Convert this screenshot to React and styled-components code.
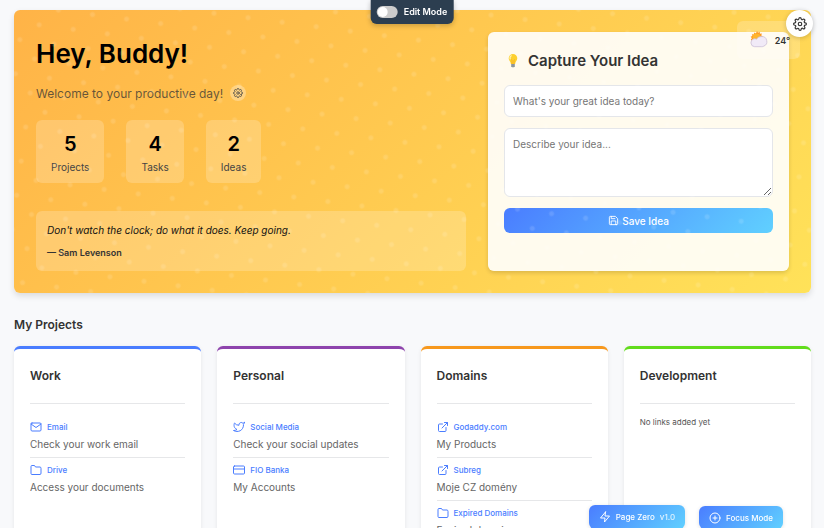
import { useState } from 'react';
import styled, { createGlobalStyle, css } from 'styled-components';
import {
  FiCreditCard,
  FiExternalLink,
  FiFolder,
  FiMail,
  FiPlusCircle,
  FiSave,
  FiSettings,
  FiTwitter,
  FiZap,
} from 'react-icons/fi';

const GlobalStyle = createGlobalStyle`
  * {
    box-sizing: border-box;
  }

  html {
    scrollbar-width: none;
  }

  body {
    margin: 0;
    background: #f8f9fb;
    color: #333;
    font-family: Inter, 'Liberation Sans', sans-serif;
  }

  h1, h2, h3, p, ul {
    margin: 0;
    padding: 0;
  }

  button, input, textarea {
    font-family: inherit;
  }
`;

const Page = styled.main`
  padding: 10px 13px 32px 14px;
`;

const Hero = styled.section`
  position: relative;
  display: grid;
  grid-template-columns: 1fr 0.7fr;
  gap: 22px;
  padding: 22px;
  border-radius: 6px;
  background: linear-gradient(135deg, #ffb347, #ffe259);
  box-shadow: 0 3px 6px rgba(0, 0, 0, 0.12);
`;

const Dots = styled.div`
  position: absolute;
  inset: 0;
  overflow: hidden;
  border-radius: 6px;
  pointer-events: none;

  &::before {
    content: '';
    position: absolute;
    inset: -200% -50%;
    background-image: radial-gradient(circle, rgba(255, 255, 255, 0.13) 2px, transparent 4px);
    background-size: 30px 30px;
    background-position: calc(50% + 15px) calc(50% + 1px);
    transform: rotate(52.5deg) scale(0.81);
  }
`;

const Intro = styled.div`
  display: flex;
  flex-direction: column;
  min-width: 0;
`;

const Title = styled.h1`
  color: #000;
  font-size: 26px;
  font-weight: 600;
  line-height: 44px;
`;

const Welcome = styled.div`
  display: flex;
  align-items: center;
  gap: 7px;
  height: 18px;
  margin-top: 8px;
  color: rgba(51, 51, 51, 0.75);
  font-size: 12px;
`;

const RoundButton = styled.button`
  display: flex;
  align-items: center;
  justify-content: center;
  width: 16px;
  height: 16px;
  padding: 0;
  border: 0;
  border-radius: 50%;
  background: rgba(255, 255, 255, 0.3);
  color: #444;
  cursor: pointer;
`;

const Stats = styled.div`
  display: flex;
  gap: 22px;
  margin-top: 18px;
`;

const Stat = styled.div`
  padding: 11px 15px 8px;
  border-radius: 6px;
  background: rgba(255, 255, 255, 0.2);
  text-align: center;

  strong {
    display: block;
    color: #000;
    font-size: 20px;
    font-weight: 600;
    line-height: 26px;
  }

  span {
    display: block;
    margin-top: 2px;
    color: #444;
    font-size: 10px;
    line-height: 16px;
  }
`;

const Quote = styled.figure`
  margin: auto 0 0;
  padding: 11px;
  border-radius: 6px;
  background: rgba(255, 255, 255, 0.2);

  blockquote {
    margin: 0 0 8px;
    color: #111;
    font-size: 10px;
    font-style: italic;
    line-height: 16px;
  }

  figcaption {
    font-size: 9px;
    font-weight: 600;
    line-height: 14px;
  }
`;

const IdeaForm = styled.form`
  display: flex;
  flex-direction: column;
  gap: 11px;
  min-width: 0;
  padding: 16px 16px 38px;
  border-radius: 6px;
  background: rgba(255, 255, 255, 0.9);
  box-shadow: 0 2px 4px rgba(0, 0, 0, 0.14);
`;

const FormTitle = styled.h2`
  display: flex;
  align-items: center;
  gap: 6px;
  font-size: 15px;
  font-weight: 600;
  line-height: 26px;
`;

const field = css`
  display: block;
  width: 100%;
  border: 1px solid #e4e6ea;
  border-radius: 6px;
  background: #fff;
  color: #333;
  font-size: 10px;
  line-height: 16px;

  &::placeholder {
    color: #757575;
  }
`;

const TextInput = styled.input`
  ${field}
  height: 32px;
  padding: 0 8px;
`;

const TextArea = styled.textarea`
  ${field}
  height: 69px;
  padding: 7px 8px;
  resize: vertical;
`;

const SaveButton = styled.button`
  display: flex;
  align-items: center;
  justify-content: center;
  gap: 3px;
  height: 25px;
  border: 0;
  border-radius: 6px;
  background: linear-gradient(135deg, #4a7dff, #60d0ff);
  color: #fff;
  font-size: 10px;
  font-weight: 500;
  cursor: pointer;
`;

const Weather = styled.div`
  position: absolute;
  top: 11px;
  right: 11px;
  display: flex;
  align-items: center;
  gap: 7px;
  height: 38px;
  padding: 0 10px 0 13px;
  border-radius: 6px;
  background: rgba(255, 255, 255, 0.2);
  font-size: 9px;
  font-weight: 600;
`;

const SettingsButton = styled.button`
  position: fixed;
  top: 10px;
  right: 11px;
  display: flex;
  align-items: center;
  justify-content: center;
  width: 27px;
  height: 27px;
  padding: 0;
  border: 0;
  border-radius: 50%;
  background: #fff;
  color: #333;
  box-shadow: 0 1px 5px rgba(0, 0, 0, 0.2);
  cursor: pointer;
`;

const EditBar = styled.label`
  position: fixed;
  top: 0;
  left: 50%;
  display: flex;
  align-items: center;
  gap: 6px;
  height: 24px;
  padding: 0 6px 2px;
  border-radius: 0 0 6px 6px;
  background: #2c3e50;
  color: #fff;
  box-shadow: 0 2px 5px rgba(0, 0, 0, 0.2);
  font-size: 9px;
  font-weight: 600;
  transform: translateX(-50%);
  cursor: pointer;
`;

const Toggle = styled.input`
  appearance: none;
  width: 21px;
  height: 12px;
  margin: 2px 0 0;
  border-radius: 6px;
  background: ${({ checked }) => (checked ? '#4a7dff' : '#ccc')};

  &::before {
    content: '';
    display: block;
    width: 10px;
    height: 10px;
    margin: 1px;
    margin-left: ${({ checked }) => (checked ? '10px' : '1px')};
    border-radius: 50%;
    background: #fff;
  }
`;

const SectionTitle = styled.h2`
  margin: 22px 0 12px;
  font-size: 12px;
  font-weight: 600;
  line-height: 19px;
`;

const Projects = styled.section`
  display: grid;
  grid-template-columns: repeat(4, 1fr);
  gap: 16px;
`;

const Card = styled.article`
  min-width: 0;
  min-height: 240px;
  padding: 16px;
  border-top: 3px solid ${({ $color }) => $color};
  border-radius: 6px;
  background: #fff;
  box-shadow: 0 1px 4px rgba(0, 0, 0, 0.08);

  h3 {
    margin-bottom: 11px;
    padding-bottom: 16px;
    border-bottom: 1px solid #e6e7e9;
    font-size: 12px;
    font-weight: 600;
    line-height: 22px;
  }
`;

const Links = styled.ul`
  list-style: none;
`;

const LinkItem = styled.li`
  padding: 5px 0;
  border-bottom: 1px solid #e6e7e9;

  &:last-child {
    border-bottom: 0;
  }

  a {
    display: flex;
    align-items: center;
    gap: 5px;
    color: #4a7dff;
    font-size: 8px;
    font-weight: 500;
    line-height: 14px;
    text-decoration: none;
  }

  p {
    margin-top: 2px;
    color: #666;
    font-size: 10px;
    line-height: 16px;
  }
`;

const Empty = styled.p`
  color: #555;
  font-size: 8px;
  line-height: 14px;
`;

const FloatingBar = styled.div`
  position: fixed;
  right: 41px;
  bottom: -1px;
  display: flex;
  align-items: flex-end;
  gap: 14px;
`;

const FloatingButton = styled.button`
  display: flex;
  align-items: center;
  gap: 5px;
  height: ${({ $tall }) => ($tall ? '24px' : '23px')};
  padding: 0 10px;
  border: 0;
  border-radius: 6px;
  background: linear-gradient(135deg, #4a7dff, #60d0ff);
  color: #fff;
  box-shadow: 0 1px 4px rgba(0, 0, 0, 0.12);
  font-size: 8px;
  font-weight: 500;
  cursor: pointer;

  small {
    font-size: 8px;
    opacity: 0.8;
  }
`;

const projects = [
  {
    name: 'Work',
    color: '#4a7dff',
    links: [
      { icon: FiMail, label: 'Email', text: 'Check your work email' },
      { icon: FiFolder, label: 'Drive', text: 'Access your documents' },
    ],
  },
  {
    name: 'Personal',
    color: '#8e44ad',
    links: [
      { icon: FiTwitter, label: 'Social Media', text: 'Check your social updates' },
      { icon: FiCreditCard, label: 'FIO Banka', text: 'My Accounts' },
    ],
  },
  {
    name: 'Domains',
    color: '#f7981d',
    links: [
      { icon: FiExternalLink, label: 'Godaddy.com', text: 'My Products' },
      { icon: FiExternalLink, label: 'Subreg', text: 'Moje CZ domény' },
      { icon: FiFolder, label: 'Expired Domains', text: 'Expired domains' },
    ],
  },
  { name: 'Development', color: '#62dc1c', links: [] },
];

const stats = [
  { value: 5, label: 'Projects' },
  { value: 4, label: 'Tasks' },
  { value: 2, label: 'Ideas' },
];

function Bulb() {
  return (
    <svg width="18" height="18" viewBox="0 0 18 18" aria-hidden="true">
      <path d="M9 2a4.3 4.3 0 0 0-4.3 4.3c0 2.3 1.9 3.2 2.2 5.7h4.2c.3-2.5 2.2-3.400 2.200-5.700A4.300 4.300 0 0 0 9 2z" fill="#fdd02f" />
      <path d="M7.3 3.800c-1.200.7-1.500 2-1.100 3.200" stroke="#fff3b0" strokeWidth="1.2" fill="none" strokeLinecap="round" />
      <path d="M8 12V8.5L7.4 7.4M10 12V8.500l.6-1.100" stroke="#f19c1c" strokeWidth=".6" fill="none" />
      <path d="M7.2 12h3.600v2.200L10 15.300H8l-.8-1.100z" fill="#8c959c" />
    </svg>
  );
}

function SunCloud() {
  return (
    <svg width="18" height="18" viewBox="0 0 18 18" aria-hidden="true">
      <path d="M7 0l1 1.700L9.700.8l.2 1.900 2-.1-.7 1.800 1.800.8-1.400 1.300L6 11 1.500 10 .8 8.300l1.200-1L.6 5.800l1.800-.7-.5-1.900 1.900.2L4.300 1.500l1.600.9z" fill="#ff9820" />
      <circle cx="6.6" cy="6.5" r="4" fill="#ffb52e" />
      <path d="M4.600 15.700a4 4 0 0 1-.5-7.900c.9-.2 1.800 0 2.400.4a5 5 0 0 1 4.700-2.600 5 5 0 0 1 2.500 9.600c-.7.400-1.400.5-2.200.5z" fill="#f1eaf7" stroke="#cbbfd6" strokeWidth=".8" />
    </svg>
  );
}

function App() {
  const [editMode, setEditMode] = useState(false);

  return (
    <>
      <GlobalStyle />
      <Page>
        <Hero>
          <Intro>
            <Title>Hey, Buddy!</Title>
            <Welcome>
              Welcome to your productive day!
              <RoundButton type="button" aria-label="Change greeting">
                <FiSettings size={10} />
              </RoundButton>
            </Welcome>
            <Stats>
              {stats.map(({ value, label }) => (
                <Stat key={label}>
                  <strong>{value}</strong>
                  <span>{label}</span>
                </Stat>
              ))}
            </Stats>
            <Quote>
              <blockquote>Don't watch the clock; do what it does. Keep going.</blockquote>
              <figcaption>— Sam Levenson</figcaption>
            </Quote>
          </Intro>
          <IdeaForm onSubmit={(e) => e.preventDefault()}>
            <FormTitle>
              <Bulb />
              Capture Your Idea
            </FormTitle>
            <TextInput aria-label="Idea title" placeholder="What's your great idea today?" />
            <TextArea aria-label="Idea description" placeholder="Describe your idea..." />
            <SaveButton type="submit">
              <FiSave size={11} />
              Save Idea
            </SaveButton>
          </IdeaForm>
          <Weather>
            <SunCloud />
            24°
          </Weather>
          <Dots />
        </Hero>

        <SectionTitle>My Projects</SectionTitle>
        <Projects>
          {projects.map(({ name, color, links }) => (
            <Card key={name} $color={color}>
              <h3>{name}</h3>
              {links.length === 0 && <Empty>No links added yet</Empty>}
              <Links>
                {links.map(({ icon: Icon, label, text }) => (
                  <LinkItem key={label}>
                    <a href="#">
                      <Icon size={12} />
                      {label}
                    </a>
                    <p>{text}</p>
                  </LinkItem>
                ))}
              </Links>
            </Card>
          ))}
        </Projects>
      </Page>

      <EditBar>
        <Toggle type="checkbox" checked={editMode} onChange={(e) => setEditMode(e.target.checked)} />
        Edit Mode
      </EditBar>
      <SettingsButton type="button" aria-label="Settings">
        <FiSettings size={14} />
      </SettingsButton>
      <FloatingBar>
        <FloatingButton type="button" $tall>
          <FiZap size={12} />
          Page Zero <small>v1.0</small>
        </FloatingButton>
        <FloatingButton type="button">
          <FiPlusCircle size={12} />
          Focus Mode
        </FloatingButton>
      </FloatingBar>
    </>
  );
}

export default App;
